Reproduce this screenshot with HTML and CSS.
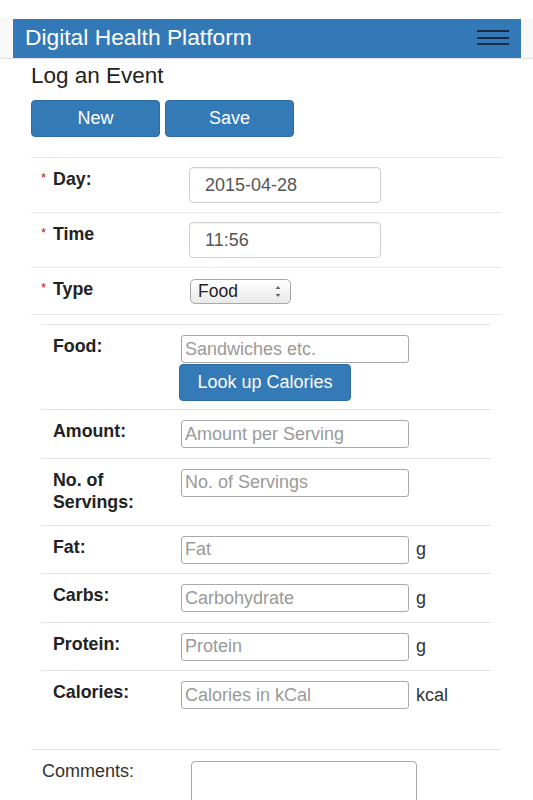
FILE: index.html
```html
<!DOCTYPE html>
<html lang="en">
<head>
<meta charset="utf-8">
<title>Digital Health Platform</title>
<link rel="stylesheet" href="styles.css">
</head>
<body>
<header class="navbar">
  <div class="bar">
    <span class="brand">Digital Health Platform</span>
    <span class="burger"><i></i><i></i><i></i></span>
  </div>
</header>
<main class="page">
  <h1 class="title">Log an Event</h1>
  <div class="actions">
    <button class="btn">New</button>
    <button class="btn">Save</button>
  </div>
  <div class="form">
    <div class="row">
      <label class="label"><span class="star">*</span>Day:</label>
      <input class="field" type="text" value="2015-04-28">
    </div>
    <div class="row">
      <label class="label"><span class="star">*</span>Time</label>
      <input class="field" type="text" value="11:56">
    </div>
    <div class="row row-type">
      <label class="label"><span class="star">*</span>Type</label>
      <div class="select"><span>Food</span>
        <svg class="arrows" width="6" height="13" viewBox="0 0 6 13"><path d="M0.5 4 L3 1 L5.5 4 Z M0.5 9 L3 12 L5.5 9 Z" fill="#666"/></svg>
      </div>
    </div>
    <div class="sub">
      <div class="srow srow-food">
        <label class="slabel">Food:</label>
        <div class="stack">
          <input class="sfield" type="text" placeholder="Sandwiches etc.">
          <button class="btn btn-lookup">Look up Calories</button>
        </div>
      </div>
      <div class="srow">
        <label class="slabel">Amount:</label>
        <input class="sfield" type="text" placeholder="Amount per Serving">
      </div>
      <div class="srow srow-serv">
        <label class="slabel">No. of<br>Servings:</label>
        <input class="sfield" type="text" placeholder="No. of Servings">
      </div>
      <div class="srow">
        <label class="slabel">Fat:</label>
        <div class="ctl"><input class="sfield" type="text" placeholder="Fat"><span class="unit">g</span></div>
      </div>
      <div class="srow">
        <label class="slabel">Carbs:</label>
        <div class="ctl"><input class="sfield" type="text" placeholder="Carbohydrate"><span class="unit">g</span></div>
      </div>
      <div class="srow">
        <label class="slabel">Protein:</label>
        <div class="ctl"><input class="sfield" type="text" placeholder="Protein"><span class="unit">g</span></div>
      </div>
      <div class="srow">
        <label class="slabel">Calories:</label>
        <div class="ctl"><input class="sfield" type="text" placeholder="Calories in kCal"><span class="unit">kcal</span></div>
      </div>
    </div>
    <div class="crow">
      <label class="clabel">Comments:</label>
      <textarea class="comments"></textarea>
    </div>
  </div>
</main>
</body>
</html>
```
FILE: styles.css
```css
html, body {
  margin: 0;
  padding: 0;
  background: #fff;
}
body {
  font-family: "Liberation Sans", Arial, Helvetica, sans-serif;
  color: #222;
}

.navbar {
  margin-top: 19px;
  background: #f8f8f8;
  border-bottom: 1px solid #e3e3e3;
  padding: 0 12px 0 13px;
}
.bar {
  height: 39px;
  background: #3379b7;
  display: flex;
  align-items: center;
  justify-content: space-between;
  padding: 0 12px 0 12px;
}
.brand {
  color: #fff;
  font-size: 22.8px;
  line-height: 39px;
  padding-bottom: 2px;
}
.burger {
  display: flex;
  flex-direction: column;
  gap: 4.5px;
  width: 32px;
  margin-bottom: 2px;
}
.burger i {
  display: block;
  height: 2px;
  background: #1b2a40;
}

.page {
  padding: 0 32px 0 31px;
}
.title {
  margin: 4px 0 0;
  font-size: 22.5px;
  font-weight: normal;
  line-height: 26px;
  color: #222;
}
.actions {
  display: flex;
  gap: 5px;
  margin-top: 11px;
}
.btn {
  width: 129px;
  height: 37px;
  margin: 0;
  padding: 0;
  background: #337ab7;
  border: 1px solid #2e6da4;
  border-radius: 4px;
  color: #fff;
  font-family: "Liberation Sans", Arial, sans-serif;
  font-size: 18px;
}

.form {
  margin-top: 20px;
}
.row {
  display: flex;
  align-items: flex-start;
  border-top: 1px solid #e6e6e6;
  padding: 9px 0 9px 10px;
}
.row-type {
  border-bottom: 1px solid #e6e6e6;
  padding-bottom: 10px;
}
.label {
  width: 148px;
  flex: none;
  font-weight: bold;
  font-size: 17.8px;
  line-height: 22px;
  color: #222;
}
.star {
  color: #d01010;
  font-size: 13px;
  font-weight: normal;
  vertical-align: 3px;
  margin-right: 7px;
}
.field {
  width: 192px;
  height: 36px;
  box-sizing: border-box;
  margin: 0;
  border: 1px solid #cfcfcf;
  border-radius: 4px;
  padding: 0 15px;
  font-family: "Liberation Sans", Arial, sans-serif;
  font-size: 18px;
  color: #555;
  box-shadow: inset 0 1px 1px rgba(0, 0, 0, 0.06);
}
.select {
  width: 101px;
  height: 25px;
  box-sizing: border-box;
  margin: 2px 0 0 1px;
  display: flex;
  align-items: center;
  justify-content: space-between;
  padding: 0 9px 0 7px;
  border: 1px solid #a8a8a8;
  border-radius: 5px;
  background: linear-gradient(#ffffff, #e9e9e9);
  font-size: 17.5px;
  color: #222;
}

.sub {
  margin: 9px 10px 30px;
}
.srow {
  display: flex;
  align-items: flex-start;
  border-top: 1px solid #e3e3e3;
  padding: 10px 0 9.5px 12px;
}
.srow-food {
  padding-bottom: 8px;
}
.srow-serv {
  padding-bottom: 12px;
}
.slabel {
  width: 128px;
  flex: none;
  font-weight: bold;
  font-size: 17.8px;
  line-height: 22px;
  color: #222;
}
.sfield {
  width: 228px;
  height: 28px;
  box-sizing: border-box;
  margin: 0;
  border: 1px solid #aaaaaa;
  border-radius: 3px;
  padding: 0 3px;
  font-family: "Liberation Sans", Arial, sans-serif;
  font-size: 18px;
  color: #555;
}
.sfield::placeholder {
  color: #9a9a9a;
}
.stack {
  display: flex;
  flex-direction: column;
  align-items: flex-start;
}
.btn-lookup {
  width: 172px;
  margin-left: -2px;
  margin-top: 1px;
}
.ctl {
  display: flex;
  align-items: baseline;
}
.unit {
  margin-left: 7px;
  font-size: 18px;
  color: #333;
}

.crow {
  display: flex;
  align-items: flex-start;
  border-top: 1px solid #e3e3e3;
  padding: 10px 0 0 11px;
}
.clabel {
  width: 149px;
  flex: none;
  font-size: 18px;
  line-height: 22px;
  color: #333;
}
.comments {
  width: 226px;
  height: 80px;
  box-sizing: border-box;
  margin: 1px 0 0;
  border: 1px solid #aaaaaa;
  border-radius: 4px;
  font-family: "Liberation Sans", Arial, sans-serif;
  font-size: 17px;
}
```
